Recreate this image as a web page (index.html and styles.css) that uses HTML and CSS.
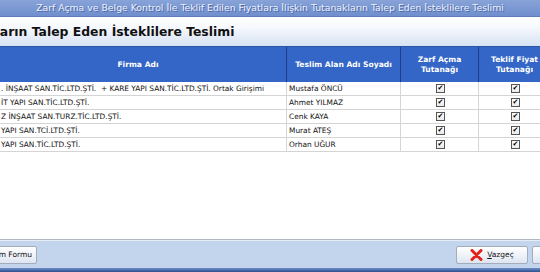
FILE: index.html
```html
<!DOCTYPE html>
<html lang="tr">
<head>
    <meta charset="UTF-8">
    <title>Tutanak Teslimi</title>
    <link rel="stylesheet" href="styles.css">
</head>
<body>
    <div class="window">
        <div class="titlebar">Zarf Açma ve Belge Kontrol İle Teklif Edilen Fiyatlara İlişkin Tutanakların Talep Eden İsteklilere Teslimi</div>
        <div class="heading"><span class="heading-text">Tutanakların Talep Eden İsteklilere Teslimi</span></div>

        <div class="grid">
            <div class="row head">
                <div class="cell c-firm">Firma Adı</div>
                <div class="cell c-name">Teslim Alan Adı Soyadı</div>
                <div class="cell c-chk">Zarf Açma<br>Tutanağı</div>
                <div class="cell c-chk2">Teklif Fiyat<br>Tutanağı</div>
            </div>
            <div class="row">
                <div class="cell c-firm"><span class="cut">. İNŞAAT SAN.TİC.LTD.ŞTİ.&nbsp; + KARE YAPI SAN.TİC.LTD.ŞTİ. Ortak Girişimi</span></div>
                <div class="cell c-name">Mustafa ÖNCÜ</div>
                <div class="cell c-chk"><span class="box">&#10004;</span></div>
                <div class="cell c-chk2"><span class="box">&#10004;</span></div>
            </div>
            <div class="row">
                <div class="cell c-firm"><span class="cut">İT YAPI SAN.TİC.LTD.ŞTİ.</span></div>
                <div class="cell c-name">Ahmet YILMAZ</div>
                <div class="cell c-chk"><span class="box">&#10004;</span></div>
                <div class="cell c-chk2"><span class="box">&#10004;</span></div>
            </div>
            <div class="row">
                <div class="cell c-firm"><span class="cut">Z İNŞAAT SAN.TURZ.TİC.LTD.ŞTİ.</span></div>
                <div class="cell c-name">Cenk KAYA</div>
                <div class="cell c-chk"><span class="box">&#10004;</span></div>
                <div class="cell c-chk2"><span class="box">&#10004;</span></div>
            </div>
            <div class="row">
                <div class="cell c-firm"><span class="cut">YAPI SAN.TCİ.LTD.ŞTİ.</span></div>
                <div class="cell c-name">Murat ATEŞ</div>
                <div class="cell c-chk"><span class="box">&#10004;</span></div>
                <div class="cell c-chk2"><span class="box">&#10004;</span></div>
            </div>
            <div class="row">
                <div class="cell c-firm"><span class="cut">YAPI SAN.TİC.LTD.ŞTİ.</span></div>
                <div class="cell c-name">Orhan UĞUR</div>
                <div class="cell c-chk"><span class="box">&#10004;</span></div>
                <div class="cell c-chk2"><span class="box">&#10004;</span></div>
            </div>
        </div>

        <div class="footer">
            <button class="btn btn-form">Teslim Formu</button>
            <div class="spacer"></div>
            <button class="btn btn-cancel">
                <svg width="13" height="12" viewBox="0 0 13 12"><path d="M2 1.5 L11 10.5 M11 1.5 L2 10.5" stroke="#e0261c" stroke-width="3" stroke-linecap="round"/></svg>
                <span><u>V</u>azgeç</span>
            </button>
            <button class="btn btn-next">Tamam</button>
        </div>
        <div class="bottomline"></div>
    </div>
</body>
</html>
```

FILE: styles.css
```css
body {
    margin: 0;
    padding: 0;
    width: 540px;
    height: 272px;
    overflow: hidden;
    font-family: "DejaVu Sans", Verdana, sans-serif;
    background-color: #fff;
}
.window {
    display: flex;
    flex-direction: column;
    height: 272px;
}
.titlebar {
    height: 16px;
    line-height: 15px;
    text-align: center;
    font-size: 9.3px;
    color: #eef2fb;
    white-space: nowrap;
    text-shadow: 1px 1px 0 #4d69a6;
    background: linear-gradient(#88a3d8, #6f8ecd);
    border-bottom: 1px solid #5e7dbd;
    overflow: hidden;
}
.heading {
    height: 29px;
    background: linear-gradient(#ffffff, #f4f7fc 40%, #d7e2f4);
    overflow: hidden;
    white-space: nowrap;
}
.heading-text {
    display: inline-block;
    margin-left: -60px;
    margin-top: 7px;
    font-size: 12.4px;
    font-weight: bold;
    color: #111;
}
.grid {
    flex: 1;
    background-color: #fff;
    border-bottom: 1px solid #b2b8c2;
    overflow: hidden;
}
.row {
    display: grid;
    grid-template-columns: 287px 114px 78px 72px;
    height: 13px;
    border-bottom: 1px solid #d4d4d4;
    font-size: 7.4px;
    color: #111;
}
.row.head {
    height: 35px;
    background-color: #3366c7;
    border-top: 1px solid #2a55a8;
    border-bottom: none;
    color: #fff;
    font-weight: bold;
    font-size: 7.6px;
}
.cell {
    display: flex;
    align-items: center;
    white-space: nowrap;
    overflow: hidden;
    border-right: 1px solid #d4d4d4;
    padding-left: 2px;
}
.head .cell {
    justify-content: center;
    text-align: center;
    line-height: 10px;
    border-right: 1px solid #1d3f86;
    padding-left: 0;
}
.head .c-firm {
    padding-right: 10px;
}
.c-chk, .c-chk2 {
    justify-content: center;
}
.cut {
    margin-left: -1px;
}
.box {
    display: inline-block;
    width: 7px;
    height: 7px;
    border: 1px solid #555;
    font-size: 7px;
    line-height: 7px;
    text-align: center;
    color: #000;
    background: linear-gradient(#fff, #eaeaea);
}
.footer {
    height: 27px;
    display: flex;
    align-items: center;
    background-color: #c2d5ed;
    border-top: 1px solid #e6edf7;
}
.spacer {
    flex: 1;
}
.btn {
    height: 18px;
    font-family: "DejaVu Sans", Verdana, sans-serif;
    font-size: 7.5px;
    color: #111;
    border: 1px solid #a2acbc;
    border-radius: 2px;
    background: linear-gradient(#ffffff, #f0f3f9 50%, #dde4f0);
    display: flex;
    align-items: center;
    justify-content: center;
    gap: 4px;
    padding: 0;
}
.btn-form {
    width: 70px;
    margin-left: -33px;
    justify-content: flex-end;
    padding-right: 4px;
}
.btn-cancel {
    width: 72px;
    margin-right: 4px;
}
.btn-next {
    width: 60px;
    margin-right: -52px;
}
.bottomline {
    height: 4px;
    background: linear-gradient(#6e8fc7, #2e4f8f);
}
```
